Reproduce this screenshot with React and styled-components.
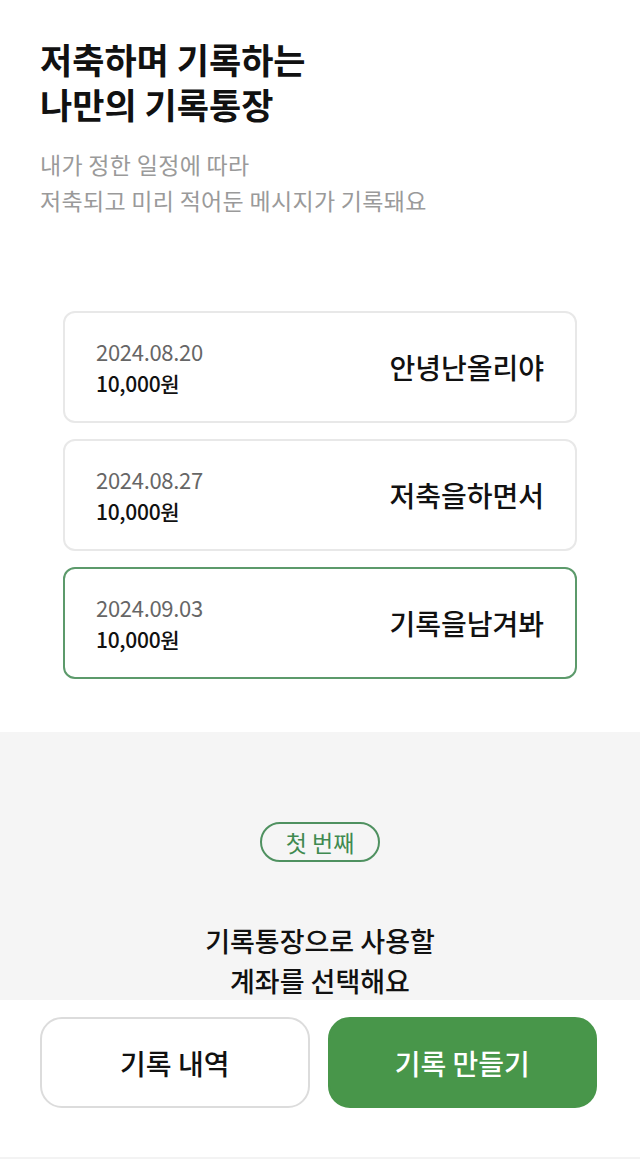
import styled, { createGlobalStyle } from 'styled-components';

const GlobalStyle = createGlobalStyle`
	* {
		box-sizing: border-box;
	}
	body {
		margin: 0;
		background: #ffffff;
		font-family: 'Noto Sans CJK KR', 'Noto Sans', sans-serif;
		color: #111111;
	}
`;

const records = [
	{ id: 1, date: '2024.08.20', amount: '10,000원', message: '안녕난올리야' },
	{ id: 2, date: '2024.08.27', amount: '10,000원', message: '저축을하면서' },
	{ id: 3, date: '2024.09.03', amount: '10,000원', message: '기록을남겨봐', selected: true },
];

function App() {
	return (
		<Container>
			<GlobalStyle />
			<Header>
				<Title>
					<TitleLine>저축하며 기록하는</TitleLine>
					<TitleLine>나만의 기록통장</TitleLine>
				</Title>
				<Description>
					내가 정한 일정에 따라
					<br />
					저축되고 미리 적어둔 메시지가 기록돼요
				</Description>
			</Header>

			<CardList>
				{records.map((record) => (
					<RecordCard key={record.id} $selected={record.selected}>
						<CardInfo>
							<DateText>{record.date}</DateText>
							<Amount>{record.amount}</Amount>
						</CardInfo>
						<Message>{record.message}</Message>
					</RecordCard>
				))}
			</CardList>

			<GuideSection>
				<StepBadge>첫 번째</StepBadge>
				<GuideText>
					기록통장으로 사용할
					<br />
					계좌를 선택해요
				</GuideText>
			</GuideSection>

			<BottomBar>
				<ActionButton>기록 내역</ActionButton>
				<ActionButton $primary>기록 만들기</ActionButton>
			</BottomBar>
		</Container>
	);
}

export default App;

const Container = styled.div`
	width: 100%;
	min-height: 100vh;
	display: flex;
	flex-direction: column;
	background: #ffffff;
`;

const Header = styled.div`
	display: flex;
	flex-direction: column;
	gap: 21px;
	padding: 38px 40px 0;
`;

const Title = styled.h1`
	display: flex;
	flex-direction: column;
	gap: 3px;
	margin: 0;
	font-size: 35px;
	font-weight: 700;
	color: #111111;
`;

const TitleLine = styled.span`
	display: block;
	line-height: 42px;
`;

const Description = styled.p`
	margin: 0;
	font-size: 23px;
	line-height: 36px;
	font-weight: 400;
	color: #9a9a9a;
	letter-spacing: 0.3px;
`;

const CardList = styled.div`
	display: flex;
	flex-direction: column;
	gap: 16px;
	padding: 93px 63px 0 63px;
`;

const RecordCard = styled.div`
	display: flex;
	align-items: center;
	justify-content: space-between;
	height: 112px;
	padding: 0 31px;
	border-radius: 12px;
	border: 2px solid ${({ $selected }) => ($selected ? '#5c9a6b' : '#e8e8e8')};
	background: #ffffff;
`;

const CardInfo = styled.div`
	display: flex;
	flex-direction: column;
`;

const DateText = styled.span`
	font-size: 22px;
	line-height: 32px;
	color: #666666;
	letter-spacing: -0.3px;
`;

const Amount = styled.span`
	font-size: 21px;
	line-height: 32px;
	font-weight: 500;
	color: #111111;
	letter-spacing: -0.3px;
`;

const Message = styled.span`
	font-size: 28px;
	font-weight: 500;
	color: #111111;
`;

const GuideSection = styled.div`
	display: flex;
	flex-direction: column;
	align-items: center;
	margin-top: 53px;
	padding: 90px 0 200px;
	background: #f5f5f5;
`;

const StepBadge = styled.div`
	display: flex;
	align-items: center;
	justify-content: center;
	width: 120px;
	height: 40px;
	border: 2px solid #4f9160;
	border-radius: 20px;
	font-size: 23px;
	color: #3f8a50;
`;

const GuideText = styled.p`
	margin: 59px 0 0;
	font-size: 27px;
	line-height: 40px;
	font-weight: 500;
	text-align: center;
	color: #111111;
`;

const BottomBar = styled.div`
	position: fixed;
	left: 0;
	right: 0;
	bottom: 0;
	height: 159px;
	display: flex;
	gap: 18px;
	padding: 17px 43px 0 40px;
	background: #ffffff;
	border-bottom: 2px solid #f3f3f3;
`;

const ActionButton = styled.button`
	flex: 1;
	height: 91px;
	border-radius: 22px;
	border: 2px solid ${({ $primary }) => ($primary ? '#48964a' : '#dcdcdc')};
	background: ${({ $primary }) => ($primary ? '#48964a' : '#ffffff')};
	color: ${({ $primary }) => ($primary ? '#ffffff' : '#111111')};
	font-family: 'Noto Sans CJK KR', 'Noto Sans', sans-serif;
	font-size: 28px;
	font-weight: 500;
	cursor: pointer;
`;
